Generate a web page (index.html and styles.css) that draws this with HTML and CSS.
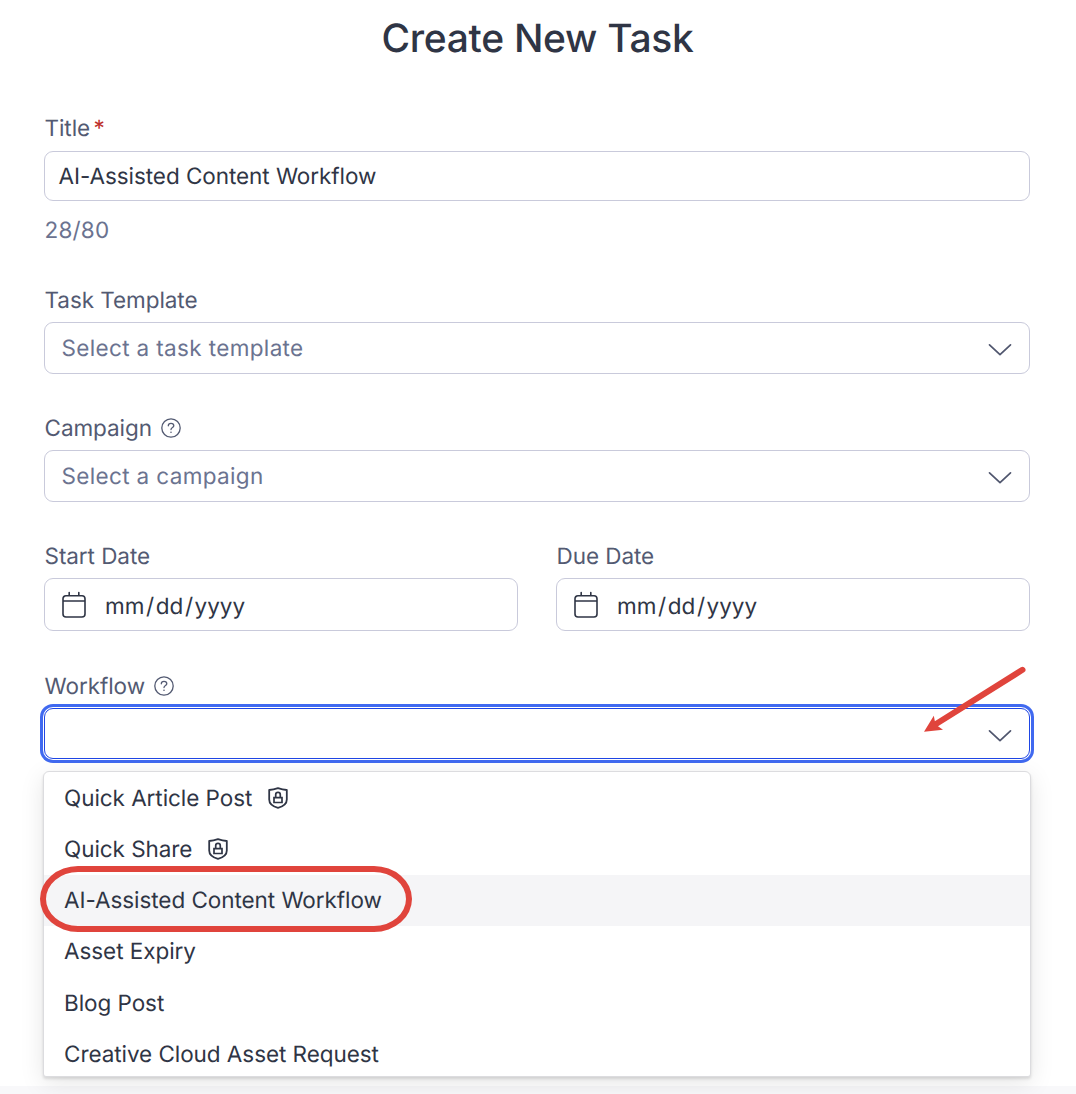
FILE: index.html
```html
<!DOCTYPE html>
<html lang="en">
<head>
<meta charset="utf-8">
<title>Create New Task</title>
<link rel="stylesheet" href="styles.css">
</head>
<body>
<svg class="defs" width="0" height="0" aria-hidden="true">
  <symbol id="chevron" viewBox="0 0 24 14"><path d="M1.500 1.800 12 11.700 22.500 1.800" fill="none" stroke="currentColor" stroke-width="1.7" stroke-linecap="round" stroke-linejoin="round"/></symbol>
  <symbol id="help" viewBox="0 0 20 20"><circle cx="10" cy="10" r="9.2" fill="none" stroke="currentColor" stroke-width="1.3"/><path d="M7.3 7.8C7.3 6.2 8.4 5.3 10 5.3s2.8 1 2.8 2.4C12.8 9.5 10 9.5 10 11.6" fill="none" stroke="currentColor" stroke-width="1.3" stroke-linecap="round"/><circle cx="10" cy="14.3" r=".8" fill="currentColor"/></symbol>
  <symbol id="calendar" viewBox="0 0 24 28"><path d="M4 4.8h16a3 3 0 0 1 3 3V23a3 3 0 0 1-3 3H4a3 3 0 0 1-3-3V7.8a3 3 0 0 1 3-3ZM1 10h22M7.2 4.8V1.5M16.8 4.8V1.5" fill="none" stroke="currentColor" stroke-width="1.6" stroke-linecap="round"/></symbol>
  <symbol id="shield" viewBox="0 0 20 22"><path d="M1.2 3C4.5 2.8 7 2.2 10 1.2 13 2.2 15.500 2.800 18.800 3V12.500C18.800 17 15 19.500 10 20.800 5 19.500 1.200 17 1.200 12.500Z" fill="none" stroke="currentColor" stroke-width="1.8" stroke-linejoin="round"/><path d="M6 10.600h8v4.900H6ZM7.700 10.600V7.700a2.300 2.300 0 0 1 4.600 0v2.900" fill="none" stroke="currentColor" stroke-width="1.700"/></symbol>
</svg>
<main class="page">
  <h1 class="heading">Create New Task</h1>
  <form class="form">
    <div class="field title-field">
      <div class="label">Title<span class="required">*</span></div>
      <div class="control text-input">AI-Assisted Content Workflow</div>
      <div class="counter">28/80</div>
    </div>
    <div class="field">
      <div class="label">Task Template</div>
      <div class="control select"><span class="placeholder">Select a task template</span><svg class="chevron"><use href="#chevron"/></svg></div>
    </div>
    <div class="field">
      <div class="label campaign-label">Campaign<svg class="help"><use href="#help"/></svg></div>
      <div class="control select"><span class="placeholder">Select a campaign</span><svg class="chevron"><use href="#chevron"/></svg></div>
    </div>
    <div class="dates">
      <div class="field">
        <div class="label">Start Date</div>
        <div class="control date"><svg class="calendar"><use href="#calendar"/></svg><span>mm<span class="slash">/</span>dd<span class="slash">/</span>yyyy</span></div>
      </div>
      <div class="field">
        <div class="label">Due Date</div>
        <div class="control date"><svg class="calendar"><use href="#calendar"/></svg><span>mm<span class="slash">/</span>dd<span class="slash">/</span>yyyy</span></div>
      </div>
    </div>
    <div class="field workflow">
      <div class="label workflow-label">Workflow<svg class="help"><use href="#help"/></svg></div>
      <div class="control select focused"><svg class="chevron"><use href="#chevron"/></svg></div>
      <ul class="menu">
        <li class="option quick-article">Quick Article Post<svg class="shield"><use href="#shield"/></svg></li>
        <li class="option quick-share">Quick Share<svg class="shield"><use href="#shield"/></svg></li>
        <li class="option active">AI-Assisted Content Workflow</li>
        <li class="option">Asset Expiry</li>
        <li class="option">Blog Post</li>
        <li class="option">Creative Cloud Asset Request</li>
      </ul>
    </div>
  </form>
  <div class="footer"></div>
  <div class="highlight"></div>
  <svg class="arrow" viewBox="0 0 110 76"><path d="M102.500 9.800 16 64" stroke="#e0443c" stroke-width="6" stroke-linecap="round"/><path d="M4 71.800 13.800 55.700 15.500 64.500 23 69.800Z" fill="#e0443c"/></svg>
</main>
</body>
</html>
```
FILE: styles.css
```css
* { box-sizing: border-box; }
body {
  margin: 0;
  background: #fff;
  color: #2f3545;
  font-family: Inter, "Liberation Sans", sans-serif;
  font-size: 22.5px;
  letter-spacing: -0.06px;
  text-rendering: geometricPrecision;
}
.defs { position: absolute; }
.page {
  position: relative;
  height: 1094px;
  overflow: hidden;
  display: flex;
  flex-direction: column;
}
.heading {
  margin: 0;
  height: 78px;
  padding-right: 1px;
  line-height: 78px;
  text-align: center;
  font-size: 39px;
  font-weight: 500;
  letter-spacing: -0.3px;
}
.form {
  flex: 1;
  display: flex;
  flex-direction: column;
  gap: 39px;
  padding: 35px 46px 0 44px;
}
.label {
  display: flex;
  align-items: center;
  height: 30px;
  margin-bottom: 7px;
  padding-left: 0.5px;
  color: #535a72;
}
.required { margin-left: 3.5px; color: #bd2f2b; }
.control {
  display: flex;
  align-items: center;
  height: 52px;
  border: 1px solid #c9cadb;
  border-radius: 9px;
  background: #fff;
}
.title-field { margin-bottom: 1px; }
.title-field .label { margin-bottom: 8px; }
.text-input { height: 50px; padding-left: 13.5px; }
.counter {
  height: 30px;
  margin-top: 14px;
  padding-left: 0.5px;
  line-height: 31px;
  letter-spacing: 0.2px;
  color: #6b7390;
}
.select { justify-content: space-between; padding: 0 17px 0 16.5px; }
.placeholder { color: #6b7390; letter-spacing: 0.35px; }
.chevron { width: 24px; height: 14px; margin: 3px 0 0 auto; color: #50566e; }
.help { width: 20px; height: 20px; margin-left: 9px; }
.dates { display: grid; grid-template-columns: 1fr 1fr; gap: 38px; }
.date { height: 53px; padding: 3px 17px 0; letter-spacing: 0; }
.slash { margin: 0 1.6px; }
.date .calendar { width: 24px; height: 28px; margin: -3px 19px 0 0; }
.workflow { position: relative; margin-top: 1px; }
.focused {
  height: 51px;
  border-color: #1f46e5;
  box-shadow: 0 0 0 1px #fff, 0 0 0 4px #4069f0;
}
.focused .chevron { margin-top: 4px; }
.menu {
  position: absolute;
  top: 100px;
  left: -1px;
  right: -1px;
  height: 306px;
  margin: 0;
  padding: 0.8px 0 0;
  list-style: none;
  background: #fff;
  border: 1px solid #dcdcdf;
  border-radius: 6px 6px 3px 3px;
  box-shadow: 0 2px 3px rgba(0, 0, 0, .12), 0 6px 24px rgba(0, 0, 0, .1);
  overflow: hidden;
}
.option {
  display: flex;
  align-items: center;
  height: 51.2px;
  padding-left: 20px;
}
.option.active { background: #f5f5f7; }
.shield { width: 20px; height: 22px; margin: -1px 0 0 16px; }
.footer { height: 8px; background: #f8f8fa; }
.highlight {
  position: absolute;
  left: 40px;
  top: 866px;
  width: 372px;
  height: 66px;
  border: 6px solid #e0443c;
  border-radius: 38px / 33px;
}
.arrow { position: absolute; left: 920px; top: 660px; width: 110px; height: 76px; }
```
